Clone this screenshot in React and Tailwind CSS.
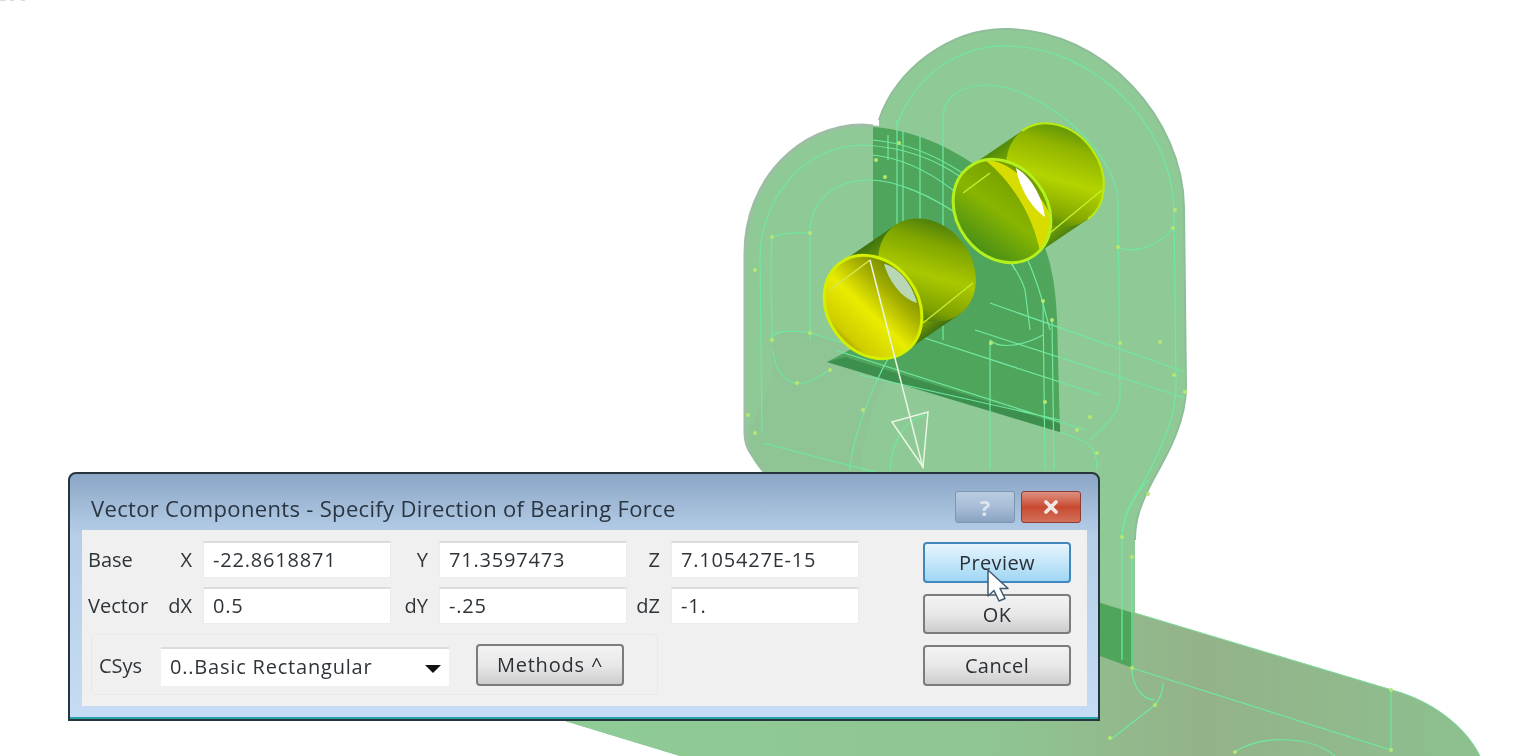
import React from "react";
import { X } from "lucide-react";

const font = { fontFamily: '"Open Sans", "Noto Sans", sans-serif' };

// junction points on the wireframe
const dots = [
  [772, 237], [810, 233], [772, 340], [810, 333], [755, 270], [748, 415], [755, 433], [797, 383], [830, 370], [863, 410],
  [899, 143], [876, 160], [885, 177], [1118, 247], [1173, 228], [1175, 210], [1120, 343], [1160, 342], [1174, 375], [1185, 392],
  [1043, 301], [1052, 320], [991, 343], [1045, 402], [1090, 417], [1077, 430], [1097, 453], [1148, 494], [1122, 537], [1132, 557],
  [1132, 668], [1155, 705], [1110, 738], [1391, 690], [1391, 750], [1235, 752],
];

function Drawing() {
  return (
    <svg className="absolute inset-0" width="1516" height="756" viewBox="0 0 1516 756" fill="none">
      <defs>
        <linearGradient id="cylA" gradientUnits="userSpaceOnUse" x1="867" y1="245" x2="933" y2="333">
          <stop offset="0" stopColor="#3f7410" />
          <stop offset="0.25" stopColor="#7fa500" />
          <stop offset="0.55" stopColor="#aac800" />
          <stop offset="0.85" stopColor="#7ea000" />
          <stop offset="1" stopColor="#3f6f12" />
        </linearGradient>
        <linearGradient id="cylB" gradientUnits="userSpaceOnUse" x1="995" y1="149" x2="1061" y2="237">
          <stop offset="0" stopColor="#4f8a0c" />
          <stop offset="0.25" stopColor="#90b400" />
          <stop offset="0.55" stopColor="#b4d400" />
          <stop offset="0.85" stopColor="#84a800" />
          <stop offset="1" stopColor="#4d8410" />
        </linearGradient>
        <linearGradient id="innerA" gradientUnits="userSpaceOnUse" x1="868" y1="255" x2="885" y2="360">
          <stop offset="0" stopColor="#5b7c00" />
          <stop offset="0.28" stopColor="#a3ad00" />
          <stop offset="0.55" stopColor="#eaec00" />
          <stop offset="0.85" stopColor="#cfcc00" />
          <stop offset="1" stopColor="#857500" />
        </linearGradient>
        <linearGradient id="innerB" gradientUnits="userSpaceOnUse" x1="985" y1="165" x2="1015" y2="262">
          <stop offset="0" stopColor="#6f9800" />
          <stop offset="0.5" stopColor="#88b500" />
          <stop offset="1" stopColor="#3f8a1a" />
        </linearGradient>
        <linearGradient id="baseTint" gradientUnits="userSpaceOnUse" x1="600" y1="740" x2="1480" y2="740">
          <stop offset="0" stopColor="#8fcb96" />
          <stop offset="0.45" stopColor="#8fc592" />
          <stop offset="0.68" stopColor="#94b289" />
          <stop offset="1" stopColor="#8dc08f" />
        </linearGradient>
        <clipPath id="clipB">
          <ellipse cx="1002" cy="211" rx="55" ry="45" transform="rotate(53 1002 211)" />
        </clipPath>
      </defs>

      {/* stray marks in the corner of the capture */}
      <path d="M0 0H6M10 0H14M21 0H25" stroke="#cfcfcf" strokeWidth="1.5" />

      {/* back plate and base */}
      <path
        d="M879 120C895 70 950 28 1007 29C1105 30 1183 120 1184 207L1186 387C1186 420 1170 450 1153 480C1140 505 1135 520 1135 540L1135 613L1392 690C1430 700 1465 725 1480 756L680 756L565 721L879 400Z"
        fill="#8fca96"
      />
      <path d="M879 120C895 70 950 28 1007 29C1105 30 1183 120 1184 207L1186 387C1186 420 1170 450 1153 480C1140 505 1135 520 1135 540" stroke="#8fbd9a" strokeWidth="2" />
      <path d="M1135 613L1392 690C1430 700 1465 725 1480 756L680 756L565 721L1100 602Z" fill="url(#baseTint)" />
      <path d="M1135 613L1392 690C1430 700 1465 725 1480 756" stroke="#7fdca0" strokeWidth="1" />
      {/* front plate */}
      <path
        d="M745 253C745 180 800 125 863 125C920 125 1000 160 1040 235C1055 265 1058 300 1058 330L1058 480L770 480C755 465 745 450 745 433Z"
        fill="#8fca96"
      />
      <path d="M767 468C755 460 745 450 745 433L745 253C745 180 800 125 863 125L873 126" stroke="#9dbda5" strokeWidth="3" />
      <path d="M772 345C772 330 790 330 810 333L855 345L827 362L887 380C870 410 863 440 860 480L770 480C755 465 748 450 748 433L772 380Z" fill="#8fc094" opacity="0.6" />
      {/* overlap of the two plates */}
      <path d="M873 127C925 130 1000 165 1040 235C1052 262 1056 290 1057 320L1060 432L827 362L855 347L873 340Z" fill="#4fa55b" />
      <path d="M827 362L845 357L1060 424L1060 432Z" fill="#3d8f4e" />
      <path d="M1100 603L1133 613L1133 668L1100 656Z" fill="#4fa55b" />

      {/* wireframe */}
      <g stroke="#6fe8a2" strokeWidth="1.2">
        <path d="M897 125C915 75 960 45 1007 46C1095 47 1172 125 1174 210L1176 385C1176 420 1160 450 1145 480C1128 505 1122 520 1122 540L1122 660" />
        <path d="M943 340L943 115C945 95 965 85 985 85C1040 85 1115 150 1118 200L1120 395C1120 415 1105 425 1090 440" />
        <path d="M1118 247C1135 255 1160 245 1173 228" />
        <path d="M897 120L897 340M903 130L903 345M888 135L888 160M920 135L920 220" />
        <path d="M873 140C930 145 1000 185 1030 250M873 155C920 160 985 200 1015 270" />
        <path d="M990 303L1185 372M975 330L1185 398M900 330L1100 395M835 350L1085 430M860 375L1060 420M763 443L1060 520" />
        <path d="M762 433L760 255C762 200 800 147 863 145C930 148 1010 185 1042 300L1050 330" />
        <path d="M810 340L810 230C812 195 840 180 870 180C920 180 1010 240 1025 290L1030 330" />
        <path d="M772 237C790 231 800 233 810 233M772 237C770 270 772 310 772 340M772 340C772 330 790 330 810 333L850 345" />
        <path d="M773 350C775 370 785 383 797 383C810 385 820 375 830 370" />
        <path d="M990 340L990 470M1043 301L1045 470M1052 320L1054 470" />
        <path d="M850 470C852 440 870 390 890 355M890 470C892 440 905 420 925 415" />
        <path d="M990 340C1000 350 1025 345 1043 335" />
        <path d="M1060 432C1085 440 1098 445 1097 470" />
        <path d="M1122 537C1125 510 1135 495 1148 480M1132 557L1132 668" />
        <path d="M1132 668L1391 750M1391 690L1391 750M1132 670C1133 690 1145 700 1155 700M1163 683C1163 690 1160 700 1155 705L1110 740M1235 752C1260 735 1310 735 1335 756" />
      </g>
      <g fill="#b5e86e">
        {dots.map(([x, y]) => (
          <circle key={`${x}-${y}`} cx={x} cy={y} r="2" />
        ))}
      </g>

      {/* far cylinder */}
      <path d="M969 167L1022 131L1088 219L1035 255Z" fill="url(#cylB)" />
      <ellipse cx="1055" cy="175" rx="55" ry="45" transform="rotate(53 1055 175)" fill="url(#cylB)" />
      <path d="M1022 131A55 45 53 0 1 1088 219" stroke="#b8ec10" strokeWidth="2" />
      <path d="M1050 233L1102 190" stroke="#c4ee30" strokeWidth="1.5" />
      <ellipse cx="1002" cy="211" rx="55" ry="45" transform="rotate(53 1002 211)" fill="url(#innerB)" />
      <g clipPath="url(#clipB)">
        <path d="M985 160C1015 160 1050 200 1060 240L1042 262C1035 215 1010 180 985 160Z" fill="#d8dc00" />
        <path d="M1016 168C1030 176 1042 195 1045 217C1032 208 1020 190 1016 168Z" fill="#ffffff" />
      </g>
      <path d="M963 193L990 173" stroke="#c4ee30" strokeWidth="1.5" />
      <ellipse cx="1002" cy="211" rx="55" ry="45" transform="rotate(53 1002 211)" stroke="#b4f01e" strokeWidth="3" />

      {/* near cylinder */}
      <path d="M840 263L894 226L960 314L906 351Z" fill="url(#cylA)" />
      <ellipse cx="927" cy="270" rx="55" ry="45" transform="rotate(53 927 270)" fill="url(#cylA)" />
      <path d="M923 323L973 283" stroke="#c4ee30" strokeWidth="1.5" />
      <ellipse cx="873" cy="307" rx="55" ry="45" transform="rotate(53 873 307)" fill="url(#innerA)" />
      <path d="M884 264C897 266 912 283 917 303C905 300 890 285 884 264Z" fill="#b9d6b5" />
      <path d="M830 290L870 260" stroke="#d8e850" strokeWidth="1.5" />
      <ellipse cx="873" cy="307" rx="55" ry="45" transform="rotate(53 873 307)" stroke="#d2f000" strokeWidth="3" />

      {/* direction arrow */}
      <g stroke="#e8f6e4" strokeWidth="1.5">
        <path d="M870 260L923 468" />
        <path d="M892 422L928 412L923 467Z" />
      </g>
    </svg>
  );
}

function Field({ label, value, labelWidth }) {
  return (
    <div className="flex items-center">
      <span className={`${labelWidth} text-right text-[20px] text-[#2f3439] mr-[11px]`}>{label}</span>
      <div className="w-[188px] h-[37px] bg-white border-t-2 border-[#dcdcdc] border-x border-b border-x-[#ececec] border-b-[#ececec] flex items-center pl-[9px] text-[20px] tracking-[0.8px] text-[#2f3439]">
        {value}
      </div>
    </div>
  );
}

function Row({ name, fields }) {
  return (
    <div className="flex items-center">
      <span className="w-[60px] pl-[6px] text-[20px] text-[#2f3439] shrink-0">{name}</span>
      <Field label={fields[0][0]} value={fields[0][1]} labelWidth="w-[50px]" />
      <Field label={fields[1][0]} value={fields[1][1]} labelWidth="w-[37px]" />
      <Field label={fields[2][0]} value={fields[2][1]} labelWidth="w-[33px]" />
    </div>
  );
}

function Btn({ children, className }) {
  return (
    <div className={`flex items-center justify-center rounded-[4px] border-2 text-[20px] tracking-[0.4px] text-[#2b3036] ${className}`}>
      {children}
    </div>
  );
}

const grayBtn = "border-[#7c7c7c] bg-gradient-to-b from-[#f3f3f3] via-[#e8e8e8] to-[#cdcdcd]";

function Dialog() {
  return (
    <div className="absolute left-[68px] top-[472px] w-[1032px] h-[249px] flex flex-col rounded-t-[8px] border-2 border-[#27353d] bg-gradient-to-b from-[#8ba7c6] via-[#b6cee8] via-25% to-[#c6dcf4]">
      <div className="h-[56px] flex justify-between shrink-0">
        <span className="pl-[21px] pt-[18px] text-[22px] tracking-[0.33px] leading-[32px] text-[#2a3542]">
          Vector Components - Specify Direction of Bearing Force
        </span>
        <div className="flex gap-[6px] pt-[17px] pr-[17px]">
          <div className="w-[60px] h-[32px] rounded-[3px] border border-[#7e95b2] bg-gradient-to-b from-[#b8cbe1] via-[#a8bdd6] to-[#8aa3c2] flex items-center justify-center text-[22px] font-bold text-[#dfe6ee]">
            ?
          </div>
          <div className="w-[60px] h-[32px] rounded-[3px] border border-[#8c3c30] bg-gradient-to-b from-[#dc9080] via-[#c8492f] to-[#d4705a] flex items-center justify-center">
            <X size={20} strokeWidth={4.5} color="#f2e6e2" />
          </div>
        </div>
      </div>
      <div className="ml-[12px] mr-[11px] h-[176px] bg-[#f0f0f0] flex">
        <div className="w-[777px] pt-[11px] flex flex-col gap-[9px]">
          <Row
            name="Base"
            fields={[
              ["X", "-22.8618871"],
              ["Y", "71.3597473"],
              ["Z", "7.105427E-15"],
            ]}
          />
          <Row
            name="Vector"
            fields={[
              ["dX", "0.5"],
              ["dY", "-.25"],
              ["dZ", "-1."],
            ]}
          />
          <div className="ml-[9px] mt-px w-[567px] h-[61px] border border-[#e8e8e8] rounded-[4px] flex items-center text-[20px] text-[#2f3439]">
            <span className="w-[69px] pl-[7px] pt-[3px]">CSys</span>
            <div className="w-[288px] h-[39px] mt-[3px] bg-white border-t-2 border-[#dcdcdc] flex items-center justify-between pl-[9px] pr-[8px] tracking-[0.8px]">
              <span>0..Basic Rectangular</span>
              <svg width="16" height="8" viewBox="0 0 16 8" className="mt-[3px]">
                <path d="M0 0H16L8 8Z" fill="#111" />
              </svg>
            </div>
            <Btn className={`ml-[27px] w-[148px] h-[42px] tracking-[0.8px] ${grayBtn}`}>Methods ^</Btn>
          </div>
        </div>
        <div className="ml-[64px] pt-[12px] flex flex-col gap-[11px] relative">
          <Btn className="w-[148px] h-[41px] border-[#3f87bd] bg-gradient-to-b from-[#e6f5fd] via-[#c4e6f9] to-[#9fd6f4]">Preview</Btn>
          <Btn className={`w-[148px] h-[40px] pt-[2px] ${grayBtn}`}>OK</Btn>
          <Btn className={`w-[148px] h-[41px] ${grayBtn}`}>Cancel</Btn>
          {/* mouse cursor */}
          <svg className="absolute left-[63px] top-[38px]" width="26" height="38" viewBox="0 0 26 38">
            <path d="M2 2V28L8 22.5L13 33L19 30.5L14 20.5H22Z" fill="#fff" stroke="#3f5a70" strokeWidth="1.5" strokeLinejoin="round" />
          </svg>
        </div>
      </div>
      <div className="absolute left-0 right-0 bottom-0 h-[2px] bg-[#2aa0a8]" />
    </div>
  );
}

export default function App() {
  return (
    <div className="relative w-[1516px] h-[756px] overflow-hidden bg-white blur-[0.4px]" style={font}>
      <Drawing />
      <Dialog />
    </div>
  );
}
